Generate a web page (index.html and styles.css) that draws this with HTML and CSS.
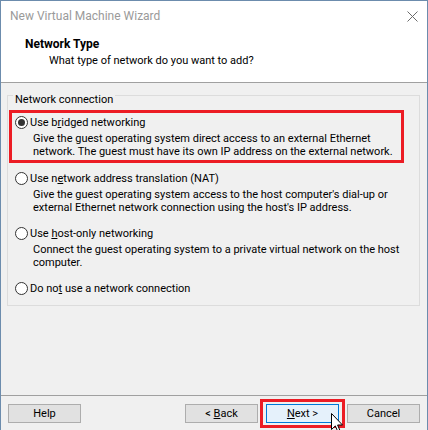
FILE: index.html
```html
<!DOCTYPE html>
<html>
<head>
<meta charset="utf-8">
<title>New Virtual Machine Wizard</title>
<link rel="stylesheet" href="styles.css">
</head>
<body>
<div class="window">
  <div class="titlebar">
    <span class="title">New Virtual Machine Wizard</span>
    <svg class="close" width="11" height="11" viewBox="0 0 11 11"><path d="M0.5 0.5 L10.5 10.5 M10.5 0.5 L0.5 10.5" stroke="#6b6b6b" stroke-width="1" fill="none"/></svg>
  </div>
  <div class="header">
    <div class="h-title">Network Type</div>
    <div class="h-sub">What type of network do you want to add?</div>
  </div>
  <div class="content">
    <div class="group">
      <div class="legend">Network connection</div>
      <div class="option highlight">
        <div class="opt-label"><span class="radio checked"></span><span class="lbl">Use b<u>r</u>idged networking</span></div>
        <div class="opt-desc">Give the guest operating system direct access to an external Ethernet<br>network. The guest must have its own IP address on the external network.</div>
      </div>
      <div class="option first-plain">
        <div class="opt-label"><span class="radio"></span><span class="lbl">Use n<u>e</u>twork address translation (NAT)</span></div>
        <div class="opt-desc">Give the guest operating system access to the host computer's dial-up or<br>external Ethernet network connection using the host's IP address.</div>
      </div>
      <div class="option">
        <div class="opt-label"><span class="radio"></span><span class="lbl">Use <u>h</u>ost-only networking</span></div>
        <div class="opt-desc">Connect the guest operating system to a private virtual network on the host<br>computer.</div>
      </div>
      <div class="option">
        <div class="opt-label"><span class="radio"></span><span class="lbl">Do no<u>t</u> use a network connection</span></div>
      </div>
    </div>
  </div>
  <div class="footer">
    <button class="btn">Help</button>
    <div class="spacer"></div>
    <button class="btn">&lt; <u>B</u>ack</button>
    <div class="mark"><button class="btn primary"><u>N</u>ext &gt;</button></div>
    <button class="btn">Cancel</button>
  </div>
  <svg class="cursor" width="13" height="20" viewBox="0 0 13 20"><path d="M0.5 0.5 L0.5 16.5 L4.3 12.9 L6.8 18.6 L9 17.6 L6.6 12 L11.5 12 Z" fill="#fff" stroke="#000" stroke-width="1" stroke-linejoin="miter"/></svg>
</div>
</body>
</html>
```
FILE: styles.css
```css
* { box-sizing: border-box; }
html, body { margin: 0; padding: 0; }
body {
  width: 428px;
  height: 430px;
  overflow: hidden;
  font-family: Roboto, "Liberation Sans", sans-serif;
  font-size: 11px;
  color: #000;
  background: #fff;
}
.window {
  position: relative;
  width: 428px;
  height: 431px;
  border: 1px solid #6c8cad;
  border-bottom: none;
  display: flex;
  flex-direction: column;
  background: #f0f0f0;
}
.titlebar {
  height: 29px;
  flex: none;
  background: #fff;
  display: flex;
  align-items: center;
  justify-content: space-between;
  padding: 0 9px 0 9px;
}
.title {
  font-size: 12px;
  color: #9a9a9a;
  line-height: 16px;
}
.close { display: block; margin-top: 1px; }
.header {
  flex: none;
  height: 53px;
  background: #fff;
  border-bottom: 1px solid #a0a0a0;
  padding: 7px 0 0 24px;
}
.h-title {
  font-size: 12px;
  font-weight: bold;
  line-height: 15px;
}
.h-sub {
  margin: 2px 0 0 24px;
  line-height: 14px;
}
.content {
  flex: 1;
  padding: 12px 0 0 6px;
}
.group {
  width: 413px;
  border: 1px solid #dcdcdc;
  padding: 0 0 10px 0;
}
.legend {
  width: fit-content;
  margin: -3px 0 0 5px;
  padding: 0 2px;
  line-height: 13px;
  background: #f0f0f0;
}
.option {
  padding-left: 7px;
  margin-top: 13px;
}
.option.first-plain { margin-top: 9px; }
.option.highlight {
  margin: 4px 0 0 1px;
  width: 395px;
  border: 3px solid #ec1c24;
  padding: 3px 0 2px 3px;
}
.opt-label {
  display: flex;
  align-items: center;
  line-height: 13px;
  height: 13px;
}
.lbl { white-space: pre; }
.radio {
  flex: none;
  width: 13px;
  height: 13px;
  border: 1px solid #333;
  border-radius: 50%;
  background: #fff;
  margin-right: 2px;
  display: flex;
  align-items: center;
  justify-content: center;
}
.radio.checked::after {
  content: "";
  width: 7px;
  height: 7px;
  border-radius: 50%;
  background: #333;
}
.opt-desc {
  margin: 3px 0 0 18px;
  line-height: 13px;
  white-space: nowrap;
}
u { text-decoration: underline; text-underline-offset: 1px; }
.footer {
  flex: none;
  height: 36px;
  border-top: 1px solid #a0a0a0;
  display: flex;
  align-items: center;
  padding: 0 7px;
}
.spacer { flex: 1; }
.btn {
  width: 73px;
  height: 19px;
  margin: 0;
  padding: 0;
  border: 1px solid #adadad;
  background: #e1e1e1;
  font-family: Roboto, "Liberation Sans", sans-serif;
  font-size: 11px;
  font-weight: normal;
  color: #000;
  line-height: 15px;
}
.btn.primary {
  display: block;
  border-color: #0078d7;
  background: #e5f1fb;
}
.mark {
  margin: 0 2px;
  border: 3px solid #ec1c24;
  padding: 2px 3px;
}
.cursor {
  position: absolute;
  left: 330px;
  top: 412px;
  z-index: 2;
}
```
